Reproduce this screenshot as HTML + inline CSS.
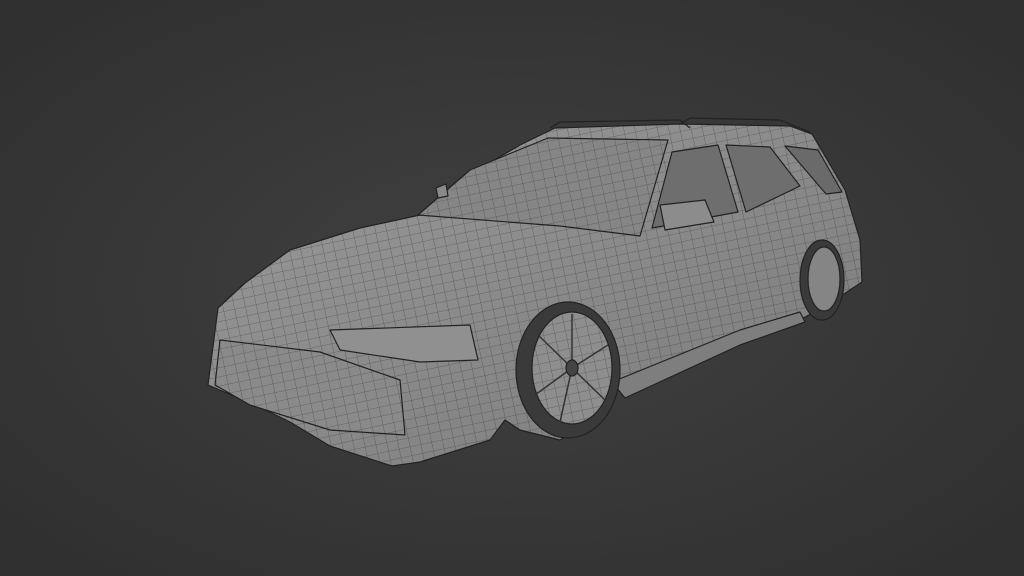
<!DOCTYPE html>
<html><head><meta charset="utf-8"><style>
html,body{margin:0;padding:0;width:1024px;height:576px;overflow:hidden;background:#383838}
svg{display:block}
</style></head><body>
<svg width="1024" height="576" viewBox="0 0 1024 576" xmlns="http://www.w3.org/2000/svg">
<defs>
<radialGradient id="bg" cx="50%" cy="50%" r="65%">
<stop offset="0" stop-color="#414141"/><stop offset="1" stop-color="#303030"/>
</radialGradient>
<pattern id="grid" width="11" height="9" patternUnits="userSpaceOnUse" patternTransform="rotate(-12)">
<path d="M0 0H11M0 0V9" stroke="#2a2a2a" stroke-width="0.8" fill="none" opacity="0.55"/>
</pattern>
<linearGradient id="body" x1="0" y1="0" x2="1" y2="1">
<stop offset="0" stop-color="#9a9a9a"/><stop offset="1" stop-color="#7a7a7a"/>
</linearGradient>
</defs>
<rect width="1024" height="576" fill="url(#bg)"/>
<g stroke="#222" stroke-width="1.2" stroke-linejoin="round">
<polygon fill="url(#body)" points="208,385 218,308 245,283 290,250 360,228 420,215 460,180 520,145 555,128 680,124 790,126 812,134 845,190 860,240 862,282 835,300 800,320 740,340 630,395 612,382 590,420 560,440 520,430 505,420 490,440 420,462 392,466 330,446 290,422 255,405"/>
<polygon fill="url(#grid)" stroke="none" points="208,385 218,308 245,283 290,250 360,228 420,215 460,180 520,145 555,128 680,124 790,126 812,134 845,190 860,240 862,282 835,300 800,320 740,340 630,395 612,382 590,420 560,440 520,430 505,420 490,440 420,462 392,466 330,446 290,422 255,405"/>
<polygon fill="#868686" points="418,215 470,170 548,138 668,140 640,236 560,226"/>
<polygon fill="url(#grid)" stroke="none" points="418,215 470,170 548,138 668,140 640,236 560,226"/>
<polygon fill="#6e6e6e" points="652,228 672,152 718,145 738,212"/>
<polygon fill="#6e6e6e" points="726,145 770,147 800,186 746,212"/>
<polygon fill="#6a6a6a" points="785,146 818,150 842,192 826,194"/>
<polygon fill="#8c8c8c" points="660,205 705,200 714,222 665,230"/>
<polygon fill="#909090" points="330,330 470,325 478,360 420,362 340,350"/>
<polygon fill="#8a8a8a" points="220,340 320,352 400,380 405,435 330,430 250,405 215,385"/>
<polygon fill="url(#grid)" stroke="none" points="220,340 320,352 400,380 405,435 330,430 250,405 215,385"/>
<polygon fill="#7e7e7e" points="612,382 740,330 800,312 805,322 740,345 625,398"/>
<polyline fill="none" points="550,128 560,122 680,120 690,128"/>
<polyline fill="none" points="680,124 690,118 780,120 810,132"/>
<ellipse cx="568" cy="370" rx="52" ry="68" fill="#3a3a3a"/>
<ellipse cx="572" cy="368" rx="40" ry="56" fill="#8e8e8e"/>
<ellipse cx="572" cy="368" rx="40" ry="56" fill="url(#grid)" stroke="none"/>
<g stroke="#333" stroke-width="1.5">
<line x1="572" y1="368" x2="572" y2="314"/><line x1="572" y1="368" x2="608" y2="345"/>
<line x1="572" y1="368" x2="605" y2="400"/><line x1="572" y1="368" x2="560" y2="422"/>
<line x1="572" y1="368" x2="535" y2="395"/><line x1="572" y1="368" x2="538" y2="335"/>
</g>
<ellipse cx="572" cy="368" rx="6" ry="8" fill="#444"/>
<ellipse cx="822" cy="280" rx="22" ry="40" fill="#3a3a3a"/>
<ellipse cx="824" cy="279" rx="16" ry="32" fill="#858585"/>
<polygon fill="#8a8a8a" points="436,188 446,184 448,196 438,198"/>
</g>
</svg>
</body></html>
